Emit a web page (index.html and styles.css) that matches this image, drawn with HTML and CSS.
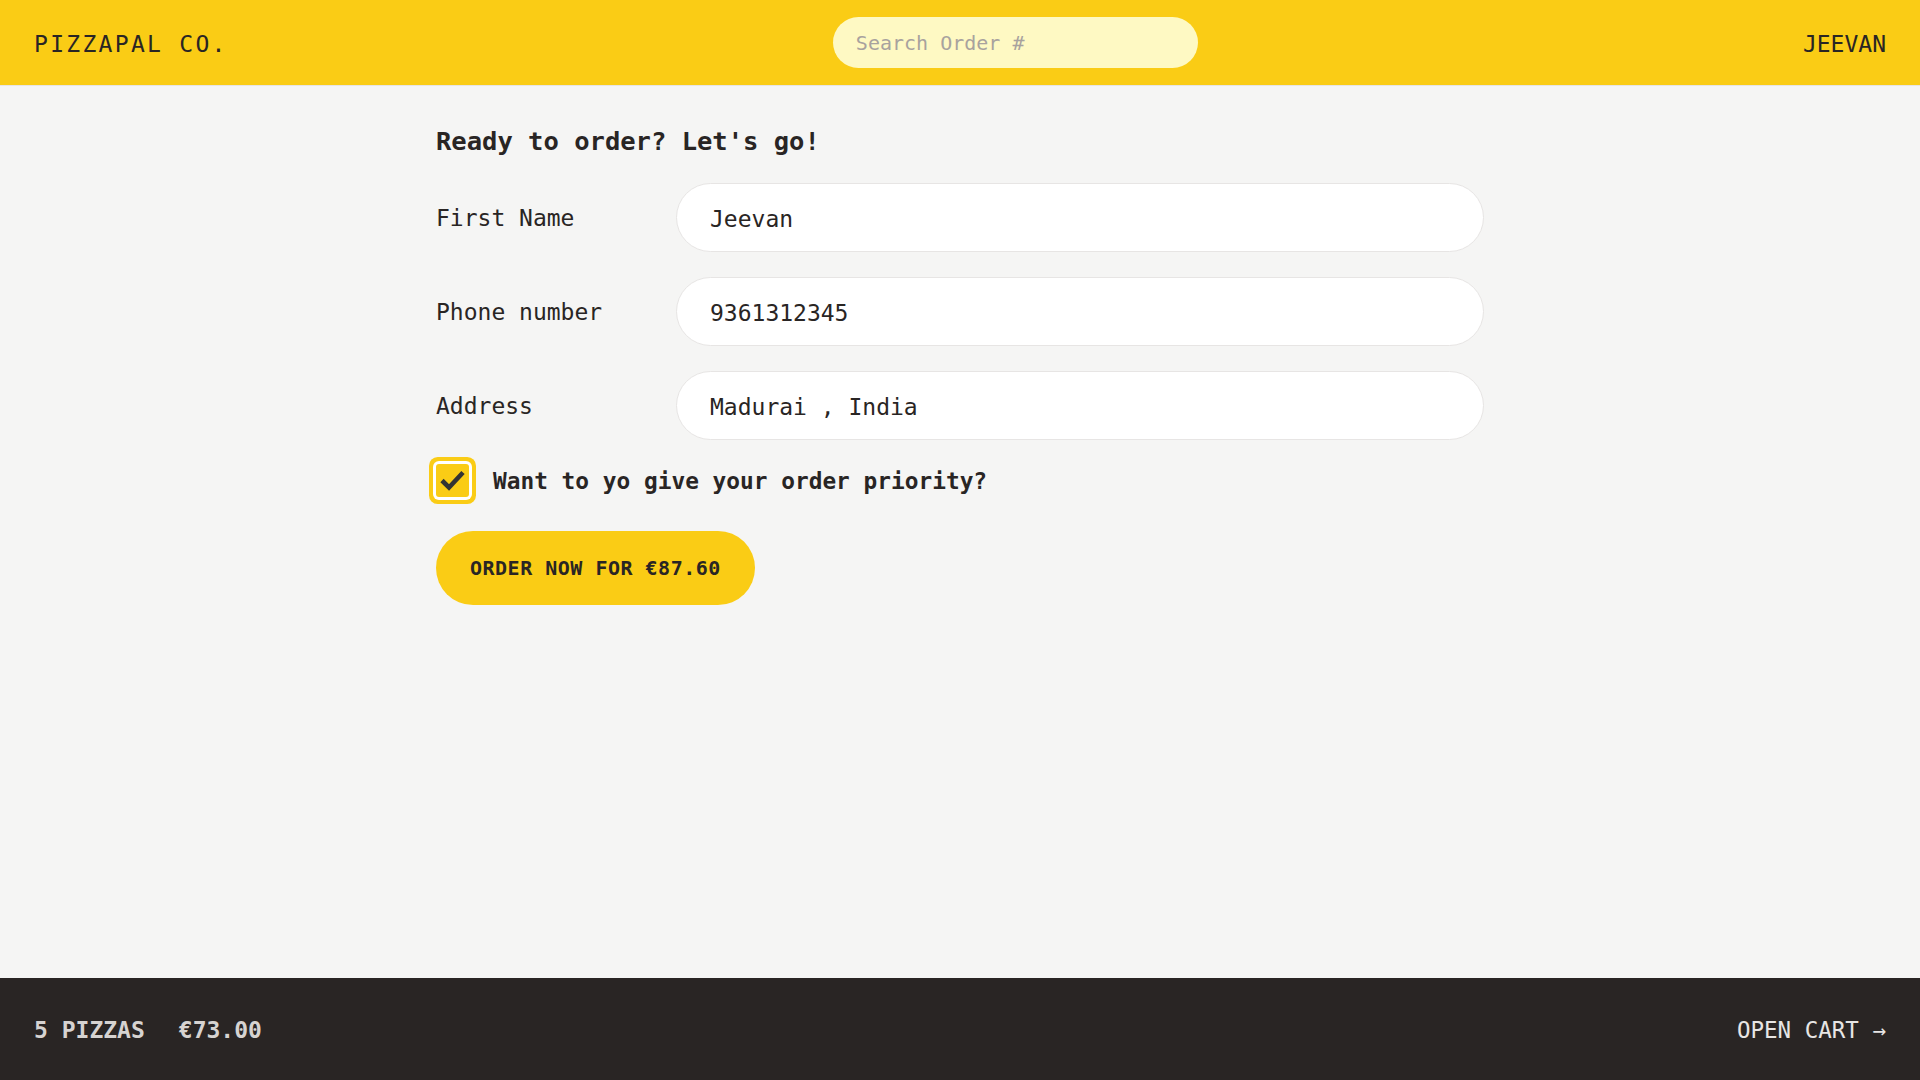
FILE: index.html
```html
<!DOCTYPE html>
<html lang="en">
<head>
<meta charset="utf-8">
<title>PizzaPal Co.</title>
<link rel="stylesheet" href="styles.css">
</head>
<body>
<div class="app">
  <header class="header">
    <a class="logo" href="#">PizzaPal Co.</a>
    <form class="search">
      <input class="search-input" type="text" placeholder="Search Order #">
    </form>
    <div class="username">Jeevan</div>
  </header>

  <main class="main">
    <div class="container">
      <h2 class="title">Ready to order? Let's go!</h2>
      <form class="order-form">
        <div class="row">
          <label class="label">First Name</label>
          <input class="input" type="text" value="Jeevan">
        </div>
        <div class="row">
          <label class="label">Phone number</label>
          <input class="input" type="tel" value="9361312345">
        </div>
        <div class="row row-last">
          <label class="label">Address</label>
          <input class="input" type="text" value="Madurai , India">
        </div>
        <div class="priority">
          <span class="checkbox">
            <svg viewBox="0 0 33 33" width="33" height="33" aria-hidden="true"><polyline points="6,16.5 13,23.5 27,8.5" fill="none" stroke="#333333" stroke-width="4.6"/></svg>
          </span>
          <label class="priority-label">Want to yo give your order priority?</label>
        </div>
        <button class="btn" type="button">Order now for €87.60</button>
      </form>
    </div>
  </main>

  <footer class="cart">
    <p class="cart-summary"><span>5 pizzas</span><span>€73.00</span></p>
    <a class="cart-link" href="#">Open cart &rarr;</a>
  </footer>
</div>
</body>
</html>
```
FILE: styles.css
```css
* { box-sizing: border-box; }

html, body {
  margin: 0;
  padding: 0;
  height: 100%;
}

body {
  font-family: "DejaVu Sans Mono", "Liberation Mono", monospace;
  color: #292524;
  background: #f5f5f4;
}

.app {
  display: flex;
  flex-direction: column;
  height: 100vh;
}

/* Header */
.header {
  height: 86px;
  flex: 0 0 86px;
  display: flex;
  align-items: center;
  justify-content: space-between;
  padding: 2px 34px 0;
  background: #facc15;
  border-bottom: 1px solid #e7e5e4;
}

.logo {
  font-size: 23px;
  letter-spacing: 0.1em;
  text-transform: uppercase;
  color: #292524;
  text-decoration: none;
}

.search { margin: 0; }

.search-input {
  display: block;
  width: 365px;
  height: 51px;
  margin-top: -2px;
  border: none;
  border-radius: 999px;
  background: #fef9c3;
  padding: 0 23px;
  font-family: inherit;
  font-size: 20px;
  color: #292524;
  outline: none;
}

.search-input::placeholder { color: #a8a29e; }

.username {
  font-size: 23px;
  text-transform: uppercase;
  color: #292524;
}

/* Main */
.main {
  flex: 1 1 auto;
  overflow: auto;
  padding-top: 35px;
}

.container {
  max-width: 1048px;
  margin: 0 auto;
}

.title {
  margin: 0 0 22px;
  font-size: 25.5px;
  line-height: 40px;
  font-weight: 700;
}

.order-form { margin: 0; }

.row {
  display: flex;
  align-items: center;
  margin-bottom: 25px;
}

.row-last { margin-bottom: 22px; }

.label {
  flex: 0 0 240px;
  font-size: 23px;
  padding-top: 1px;
}

.input {
  flex: 1 1 auto;
  height: 69px;
  border: 1px solid #e7e5e4;
  border-radius: 999px;
  background: #ffffff;
  padding: 2px 33px 0;
  font-family: inherit;
  font-size: 23px;
  color: #292524;
  outline: none;
}

.priority {
  display: flex;
  align-items: center;
  gap: 24px;
  margin-bottom: 33px;
}

.checkbox {
  flex: 0 0 33px;
  width: 33px;
  height: 33px;
  border-radius: 3px;
  background: #facc15;
  box-shadow: 0 0 0 3px #ffffff, 0 0 0 7px #facc15;
  display: flex;
}

.priority-label {
  font-size: 22.8px;
  font-weight: 700;
  line-height: 33px;
  padding-top: 3px;
}

.btn {
  height: 74px;
  padding: 0 34px;
  border: none;
  border-radius: 999px;
  background: #facc15;
  color: #292524;
  font-family: inherit;
  font-size: 20px;
  font-weight: 700;
  letter-spacing: 0.025em;
  text-transform: uppercase;
  cursor: pointer;
}

/* Cart footer */
.cart {
  flex: 0 0 102px;
  height: 102px;
  display: flex;
  align-items: center;
  justify-content: space-between;
  padding: 2px 34px 0;
  background: #292524;
  color: #e7e5e4;
  font-size: 23px;
  text-transform: uppercase;
}

.cart-summary {
  margin: 0;
  display: flex;
  gap: 34px;
  color: #d6d3d1;
  font-weight: 700;
}

.cart-link {
  color: #e7e5e4;
  text-decoration: none;
  font-size: 22.5px;
}
```
